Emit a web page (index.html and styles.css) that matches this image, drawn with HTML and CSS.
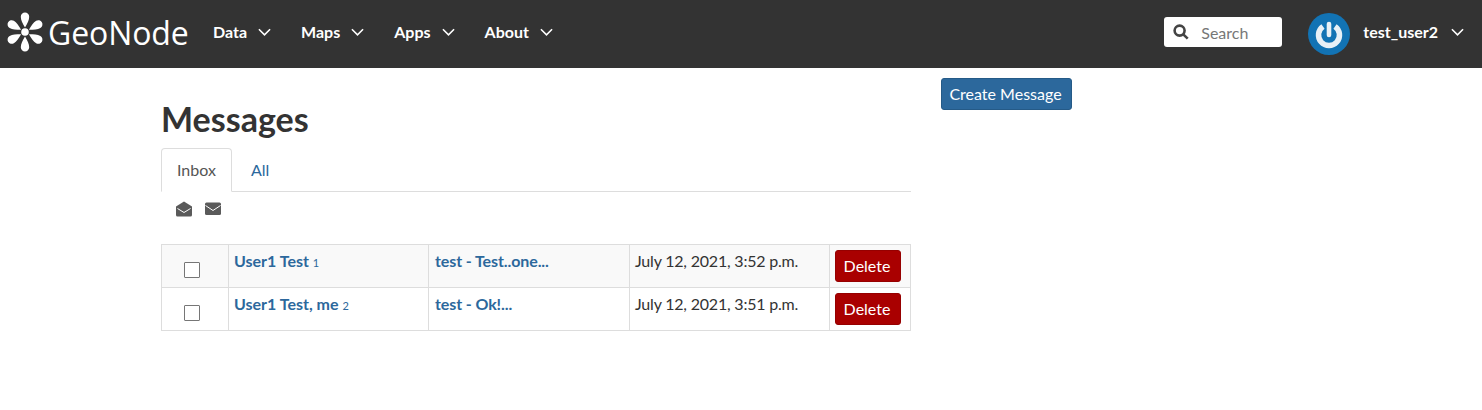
FILE: index.html
```html
<!DOCTYPE html>
<html lang="en">
<head>
  <meta charset="UTF-8">
  <title>Messages - GeoNode</title>
  <link rel="stylesheet" href="styles.css">
</head>
<body>
  <nav class="topbar">
    <a class="brand" href="#">
      <svg class="brand-mark" viewBox="0 0 40 42" width="40" height="42">
        <defs>
          <path id="petal" d="M20 15.500C17.500 11 15.800 8 15.800 4.700a4.200 4.200 0 0 1 8.400 0C24.200 8 22.500 11 20 15.500z"/>
        </defs>
        <g fill="#fff">
          <circle cx="20" cy="21" r="3.800"/>
          <use href="#petal" y="1"/>
          <use href="#petal" y="1" transform="rotate(60 20 21)"/>
          <use href="#petal" y="1" transform="rotate(120 20 21)"/>
          <use href="#petal" y="1" transform="rotate(180 20 21)"/>
          <use href="#petal" y="1" transform="rotate(240 20 21)"/>
          <use href="#petal" y="1" transform="rotate(300 20 21)"/>
        </g>
      </svg>
      <span class="brand-name">GeoNode</span>
    </a>
    <ul class="nav-menu">
      <li><span class="nav-label">Data</span> <svg class="chevron" viewBox="0 0 14 8"><path d="M1 1l6 6 6-6"/></svg></li>
      <li><span class="nav-label">Maps</span> <svg class="chevron" viewBox="0 0 14 8"><path d="M1 1l6 6 6-6"/></svg></li>
      <li><span class="nav-label">Apps</span> <svg class="chevron" viewBox="0 0 14 8"><path d="M1 1l6 6 6-6"/></svg></li>
      <li><span class="nav-label">About</span> <svg class="chevron" viewBox="0 0 14 8"><path d="M1 1l6 6 6-6"/></svg></li>
    </ul>
    <div class="search-box">
      <svg class="search-icon" viewBox="0 0 16 16"><circle cx="6.600" cy="6.600" r="5"/><path d="M10.300 10.300l4.400 4.400"/></svg>
      <span class="search-text">Search</span>
    </div>
    <div class="user-menu">
      <svg class="avatar" viewBox="0 0 42 42">
        <circle cx="21" cy="21" r="21" fill="#1273b4"/>
        <g class="avatar-mark">
          <path d="M15 13.400a10.500 10.500 0 1 0 12 0" fill="none" stroke="#e8f0f6" stroke-width="5.500"/>
          <path d="M21 11v11" stroke="#e8f0f6" stroke-width="4.600" stroke-linecap="round"/>
        </g>
      </svg>
      <span class="user-name nav-label">test_user2</span>
      <svg class="chevron" viewBox="0 0 14 8"><path d="M1 1l6 6 6-6"/></svg>
    </div>
  </nav>

  <div class="page">
    <main class="main-col">
      <h1>Messages</h1>
      <ul class="tabs">
        <li class="tab active">Inbox</li>
        <li class="tab">All</li>
      </ul>
      <div class="mail-actions">
        <svg viewBox="0 0 16 16" width="16" height="16"><path d="M8 0.500L16 5.500V14a1.600 1.600 0 0 1-1.600 1.600H1.600A1.600 1.600 0 0 1 0 14V5.500z" fill="#5a5a5a"/><path d="M1.500 7.500L8 11.500l6.500-4" fill="none" stroke="#fff" stroke-width="1"/></svg>
        <svg viewBox="0 0 16 14" width="16" height="14"><rect y="0.500" width="16" height="12.500" rx="1.500" fill="#5a5a5a"/><path d="M0.500 3.500L8 8.500l7.500-5" fill="none" stroke="#fff" stroke-width="1"/></svg>
      </div>
      <table class="threads">
        <tr class="odd">
          <td class="col-check"><span class="check"></span></td>
          <td class="col-who"><a href="#">User1 Test <small>1</small></a></td>
          <td class="col-subject"><a href="#">test - Test..one...</a></td>
          <td class="col-date">July 12, 2021, 3:52 p.m.</td>
          <td class="col-del"><button class="btn-delete">Delete</button></td>
        </tr>
        <tr>
          <td class="col-check"><span class="check"></span></td>
          <td class="col-who"><a href="#">User1 Test, me <small>2</small></a></td>
          <td class="col-subject"><a href="#">test - Ok!...</a></td>
          <td class="col-date">July 12, 2021, 3:51 p.m.</td>
          <td class="col-del"><button class="btn-delete">Delete</button></td>
        </tr>
      </table>
    </main>
    <aside class="side-col">
      <button class="btn-create">Create Message</button>
    </aside>
  </div>
</body>
</html>
```

FILE: styles.css
```css
body { margin: 0; background: #fff; font-family: "Lato", sans-serif; font-size: 16px; color: #333; }
a { color: #2c689c; text-decoration: none; }
ul { list-style: none; margin: 0; padding: 0; }

.topbar { display: flex; align-items: center; box-sizing: border-box; height: 68px; padding-bottom: 4px; background: #333; color: #fff; font-weight: 700; }
.brand { display: flex; align-items: center; margin-left: 4px; width: 209px; color: #fff; }
.brand-mark { width: 42px; height: 42px; }
.brand-name { font-family: "Open Sans", sans-serif; font-weight: 500; font-size: 32px; letter-spacing: -0.1px; margin-left: 2px; }
.nav-menu { display: flex; gap: 30px; }
.nav-menu li { display: flex; align-items: center; gap: 11px; }
.nav-label { padding-bottom: 2px; }
.chevron { width: 13px; height: 8px; fill: none; stroke: #fff; stroke-width: 1.700; }

.search-box { display: flex; align-items: center; box-sizing: border-box; width: 118px; height: 30px; margin-left: auto; padding-left: 9px; background: #fff; border-radius: 3px; }
.search-icon { width: 16px; height: 16px; fill: none; stroke: #444; stroke-width: 2.600; }
.search-text { margin-left: 12px; color: #777; font-weight: 400; }

.user-menu { display: flex; align-items: center; margin: 0 18px 0 26px; }
.avatar { width: 42px; height: 42px; margin-top: 4px; }
.avatar-mark { filter: blur(0.4px); }
.user-name { margin: 0 13px; }

.page { display: flex; gap: 30px; padding: 10px 0 0 161px; }
.main-col { width: 750px; }
.side-col { width: 360px; }
h1 { margin: 23px 0 11px; font-size: 34px; font-weight: 700; line-height: 36px; color: #333; }

.tabs { display: flex; gap: 3px; border-bottom: 1px solid #ddd; height: 43px; }
.tab { box-sizing: border-box; height: 44px; padding: 11px 15px 13px; color: #2c689c; line-height: 20px; border: 1px solid transparent; }
.tab.active { color: #555; background: #fff; border-color: #ddd #ddd #fff; border-radius: 4px 4px 0 0; }

.mail-actions { display: flex; align-items: center; gap: 13px; height: 52px; padding: 0 0 18px 15px; box-sizing: border-box; }

.threads { width: 750px; border-collapse: collapse; table-layout: fixed; }
.threads td { height: 42px; padding: 5px; border: 1px solid #ddd; vertical-align: top; line-height: 22px; box-sizing: border-box; }
.threads .odd td { background: #f9f9f9; }
.threads a { font-weight: 700; }
.threads small { font-size: 11px; font-weight: 400; }
.col-check { width: 67px; }
.col-who { width: 200px; }
.col-date { width: 200px; letter-spacing: -0.2px; }
.col-subject { width: 201px; }
.threads .col-subject { padding-left: 6px; letter-spacing: -0.1px; }
.check { display: block; box-sizing: border-box; width: 16px; height: 16px; margin: 12px 0 0 17px; background: #fff; border: 1px solid #767676; border-radius: 1px; }

.btn-delete { display: block; height: 32px; padding: 0 9px 2px 7px; width: 66px; background: #a90000; border: 1px solid #960000; border-radius: 3px; color: #fff; font: 400 16px "Lato", sans-serif; }
.btn-create { height: 32px; padding: 0 9px 2px 7px; width: 131px; background: #2c689c; border: 1px solid #255a87; border-radius: 3px; color: #fff; font: 400 16px "Lato", sans-serif; }
```
